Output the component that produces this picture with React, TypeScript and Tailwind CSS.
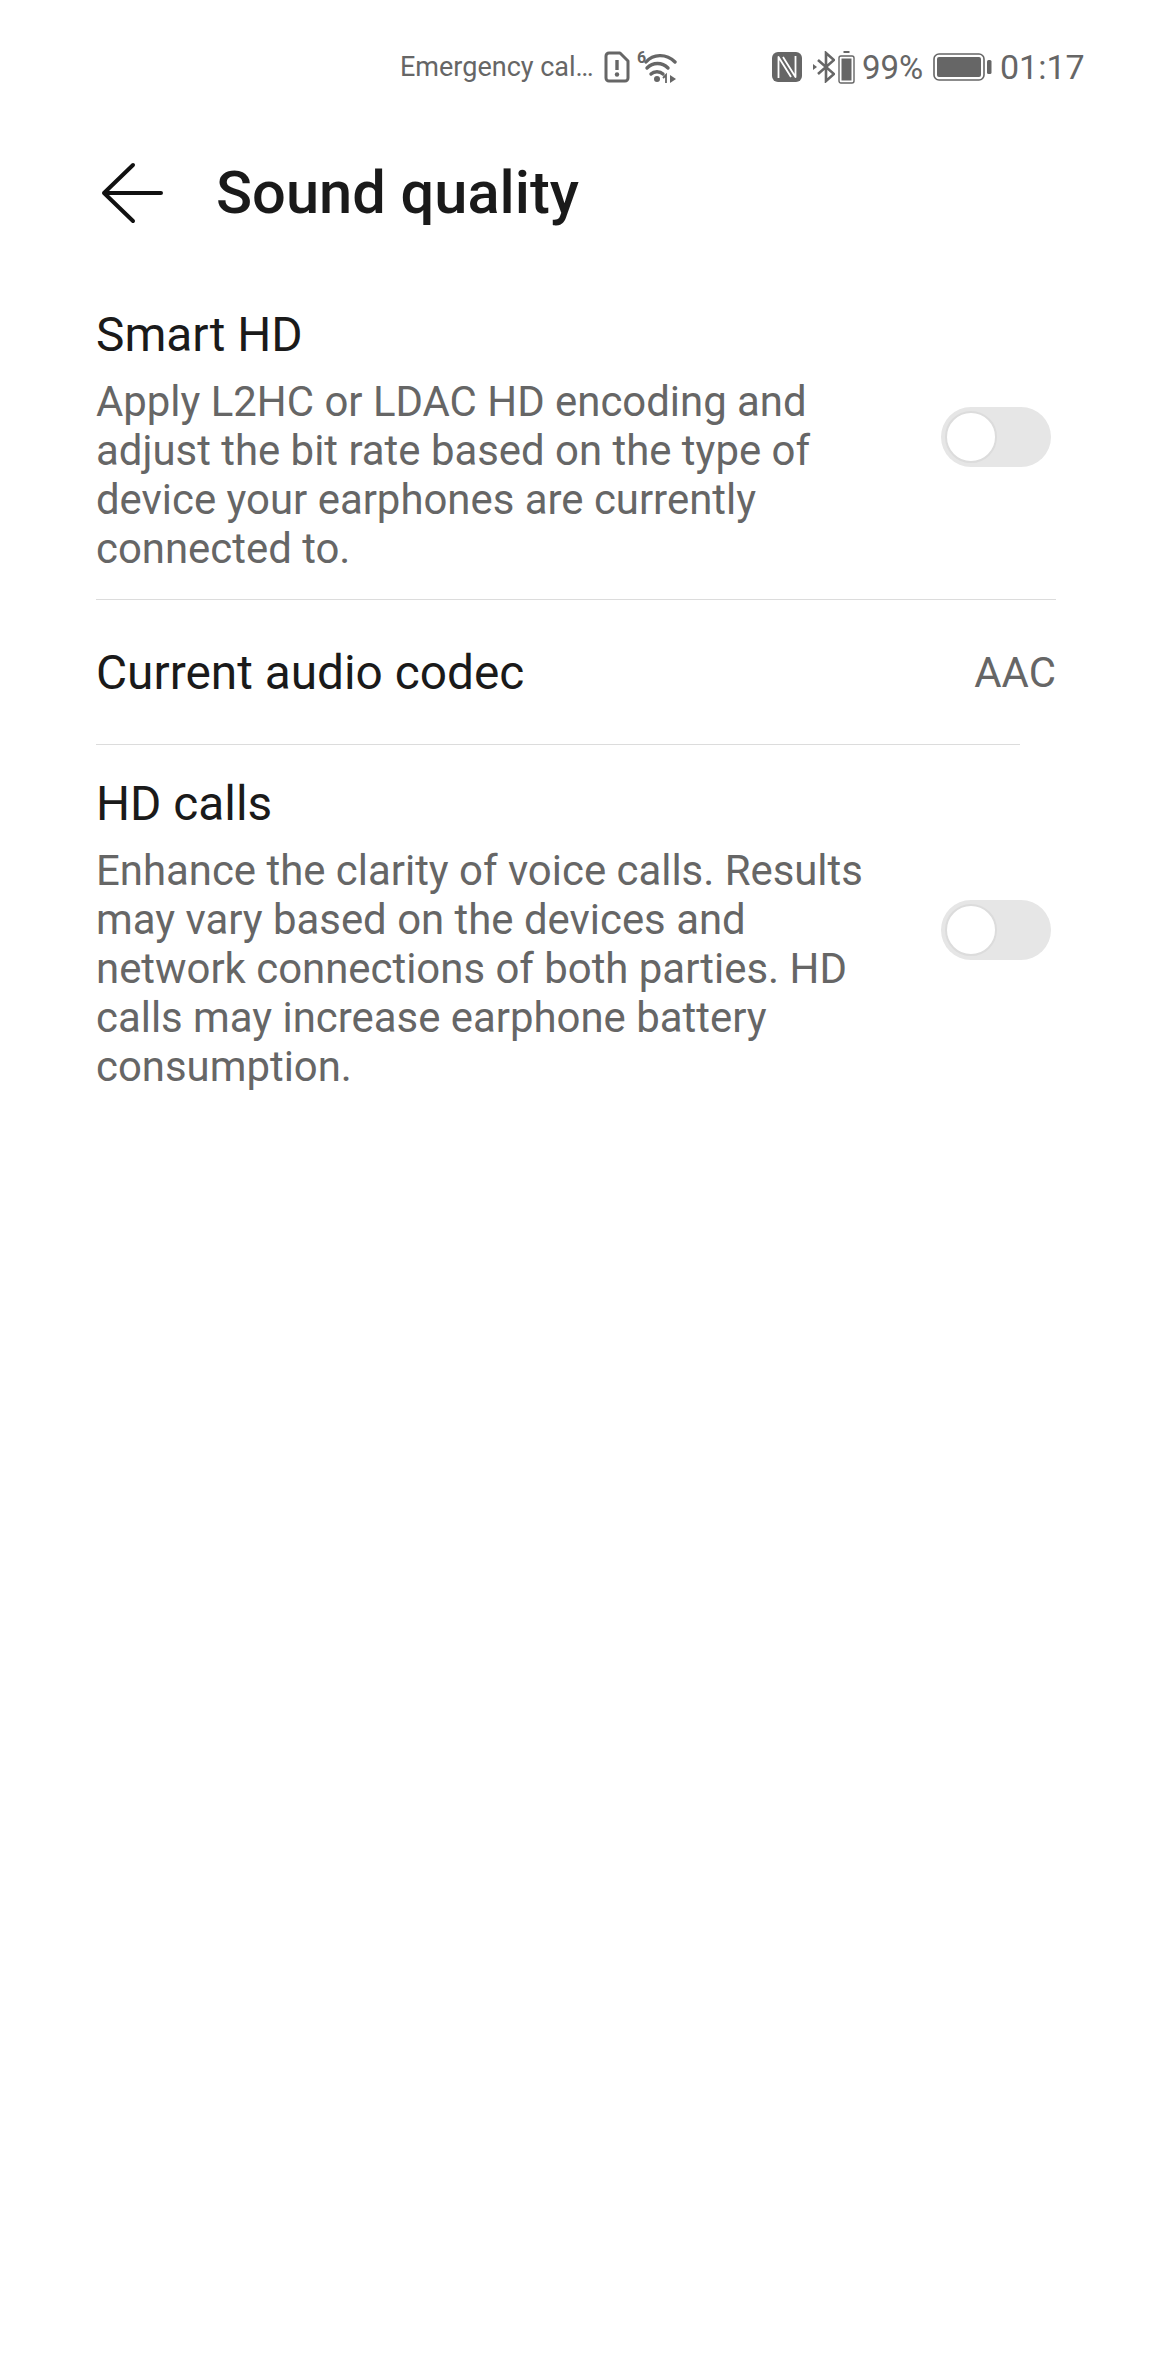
function SimAlertIcon() {
  return (
    <svg width="26" height="32" viewBox="0 0 26 32" fill="none" className="text-[#666666]">
      <path d="M5 2h11l8 8v17a3 3 0 0 1-3 3H5a3 3 0 0 1-3-3V5a3 3 0 0 1 3-3z" stroke="currentColor" strokeWidth="3" strokeLinejoin="round" />
      <path d="M13 9v10" stroke="currentColor" strokeWidth="3.4" />
      <circle cx="13" cy="23.5" r="2.2" fill="currentColor" />
    </svg>
  );
}

function WifiIcon() {
  return (
    <svg width="40" height="32" viewBox="0 0 40 32" fill="none" className="text-[#666666]">
      <text x="0" y="12" fontSize="16" fontWeight="700" fill="currentColor" fontFamily="Roboto, sans-serif">6</text>
      <path d="M9 11C16 3 29 2 38 11" stroke="currentColor" strokeWidth="3.4" strokeLinecap="round" />
      <path d="M10 17c6-6 15-6 21 0" stroke="currentColor" strokeWidth="3.4" strokeLinecap="round" />
      <path d="M14 23c3-3 9-3 12 0" stroke="currentColor" strokeWidth="3.4" strokeLinecap="round" />
      <circle cx="20" cy="28" r="3" fill="currentColor" />
      <path d="M29 32v-8l-3 3" stroke="currentColor" strokeWidth="1.8" />
      <path d="M33 24v8l6-4z" fill="currentColor" />
    </svg>
  );
}

function NfcIcon() {
  return (
    <svg width="30" height="32" viewBox="0 0 30 32" className="text-[#666666]">
      <rect x="0" y="1" width="30" height="30" rx="6" fill="currentColor" />
      <path d="M6.500 27V6l12.500 20" fill="none" stroke="#ffffff" strokeWidth="1.800" strokeLinejoin="round" />
      <path d="M23.500 5v21L11 6" fill="none" stroke="#ffffff" strokeWidth="1.800" strokeLinejoin="round" />
    </svg>
  );
}

function BluetoothIcon() {
  return (
    <svg width="22" height="32" viewBox="0 0 22 32" fill="none" className="text-[#666666]">
      <path d="M5 9l16 14-8 7V2l8 7L5 23" stroke="currentColor" strokeWidth="2.600" strokeLinejoin="miter" />
      <path d="M0 13l4 3-4 3z" fill="currentColor" />
    </svg>
  );
}

function HeadsetBatteryIcon() {
  return (
    <svg width="17" height="33" viewBox="0 0 17 33" fill="none" className="text-[#666666]">
      <rect x="5.500" y="0" width="6" height="2" fill="currentColor" />
      <rect x="1" y="5" width="15" height="27" rx="2" stroke="currentColor" strokeWidth="1.400" />
      <rect x="3.500" y="7.500" width="10" height="22" fill="currentColor" />
    </svg>
  );
}

function BatteryIcon() {
  return (
    <svg width="59" height="28" viewBox="0 0 59 28" fill="none" className="text-[#666666]">
      <rect x="1" y="1" width="50" height="26" rx="5" stroke="currentColor" strokeWidth="1.600" />
      <rect x="4" y="4" width="44" height="20" rx="2" fill="currentColor" />
      <rect x="54" y="7" width="4.500" height="14" rx="1.500" fill="currentColor" />
    </svg>
  );
}

function BackArrow() {
  return (
    <svg width="64" height="62" viewBox="0 0 64 62" fill="none" className="text-[#111111]">
      <path d="M4 31h57M33 3 4 31l29 28" stroke="currentColor" strokeWidth="4" strokeLinecap="round" strokeLinejoin="round" />
    </svg>
  );
}

function Toggle() {
  return (
    <div className="mb-[7px] flex h-[60px] w-[110px] shrink-0 items-center rounded-full bg-[#e6e6e6] pl-1">
      <div className="size-[52px] rounded-full border-2 border-[#dcdcdc] bg-white" />
    </div>
  );
}

type SettingProps = {
  title: string;
  lines: string[];
};

function SettingRow({ title, lines }: SettingProps) {
  return (
    <div className="flex items-center justify-between pr-[5px]">
      <div>
        <p className="text-[47.8px] leading-[56px] text-[#1a1a1a]">{title}</p>
        <div className="mt-[14px] text-[41.9px] leading-[49px] text-[#666666]">
          {lines.map((line) => (
            <p key={line} className="whitespace-nowrap">
              {line}
            </p>
          ))}
        </div>
      </div>
      <Toggle />
    </div>
  );
}

export default function App() {
  return (
    <main className="min-h-[2376px] w-[1152px] bg-white font-['Roboto',sans-serif]">
      <header className="flex h-[85px] items-start pl-[400px] pt-[49px] text-[#666666]">
        <div className="flex h-[36px] items-center whitespace-nowrap">
          <span className="w-[196px] text-[27px] leading-none">Emergency cal…</span>
          <span className="ml-[8px]"><SimAlertIcon /></span>
          <span className="ml-[7px]"><WifiIcon /></span>
          <span className="ml-[95px]"><NfcIcon /></span>
          <span className="ml-[11px]"><BluetoothIcon /></span>
          <span className="ml-[3px]"><HeadsetBatteryIcon /></span>
          <span className="ml-[7px] w-[61px] text-[33px] leading-none">99%</span>
          <span className="ml-[10px]"><BatteryIcon /></span>
          <span className="ml-[8px] text-[34px] leading-none">01:17</span>
        </div>
      </header>

      <div className="mt-[72px] flex h-[72px] items-center pl-[100px]">
        <BackArrow />
        <h1 className="ml-[52px] pt-[2px] text-[59.6px] font-medium leading-none text-[#1a1a1a]">Sound quality</h1>
      </div>

      <section className="mt-[78px] px-[96px]">
        <SettingRow
          title="Smart HD"
          lines={[
            "Apply L2HC or LDAC HD encoding and",
            "adjust the bit rate based on the type of",
            "device your earphones are currently",
            "connected to.",
          ]}
        />
        <div className="mt-[26px] h-px bg-[#dcdcdc]" />
        <div className="flex h-[144px] items-center justify-between pt-[3px]">
          <span className="text-[47.8px] text-[#1a1a1a]">Current audio codec</span>
          <span className="text-[41.9px] text-[#666666]">AAC</span>
        </div>
        <div className="mr-[36px] h-px bg-[#dcdcdc]" />
        <div className="mt-[31px]">
          <SettingRow
            title="HD calls"
            lines={[
              "Enhance the clarity of voice calls. Results",
              "may vary based on the devices and",
              "network connections of both parties. HD",
              "calls may increase earphone battery",
              "consumption.",
            ]}
          />
        </div>
      </section>
    </main>
  );
}
